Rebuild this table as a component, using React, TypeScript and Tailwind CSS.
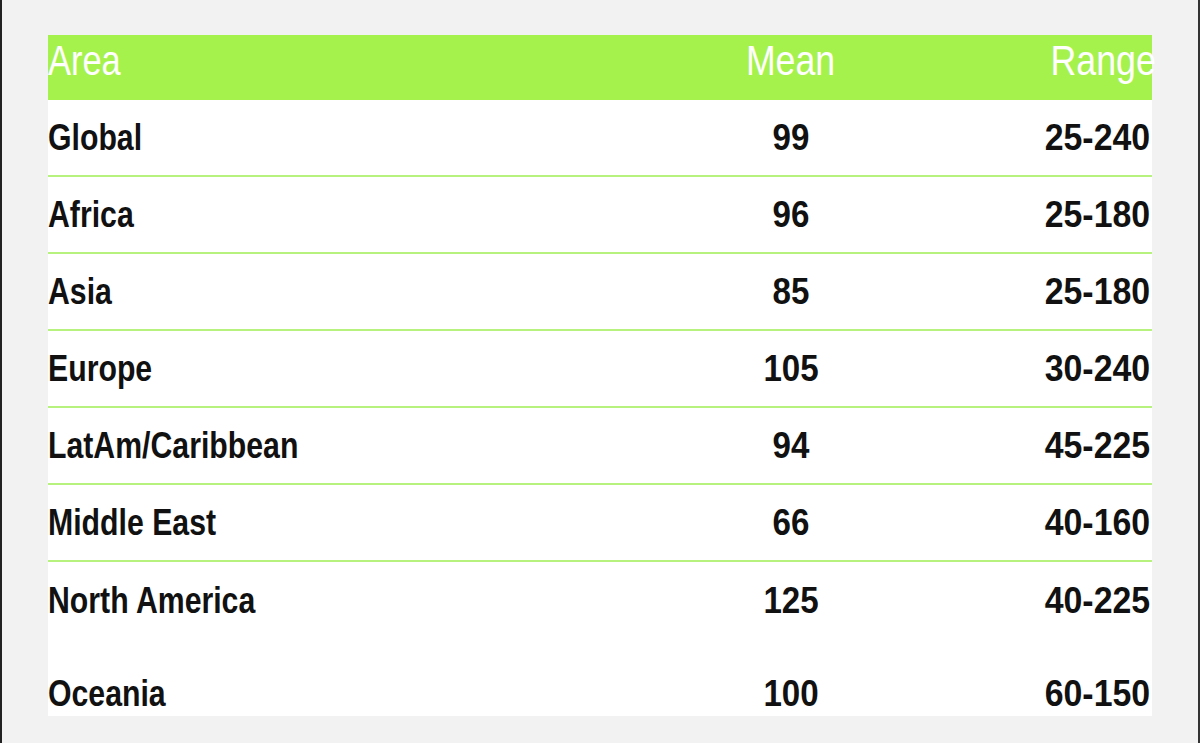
import React from "react";

const rows = [
  ["Global", "99", "25-240"],
  ["Africa", "96", "25-180"],
  ["Asia", "85", "25-180"],
  ["Europe", "105", "30-240"],
  ["LatAm/Caribbean", "94", "45-225"],
  ["Middle East", "66", "40-160"],
  ["North America", "125", "40-225"],
  ["Oceania", "100", "60-150"],
];

function Cells({ r }: { r: string[] }) {
  return (
    <>
      <div className="flex-1">
        <span className="inline-block origin-left scale-x-[0.84] whitespace-nowrap">{r[0]}</span>
      </div>
      <div className="w-[120px] text-center mr-[181px]">
        <span className="inline-block origin-center scale-x-[0.92] whitespace-nowrap">{r[1]}</span>
      </div>
      <div className="w-[120px] text-right pr-[2px]">
        <span className="inline-block origin-right scale-x-[0.94] whitespace-nowrap">{r[2]}</span>
      </div>
    </>
  );
}

export default function App() {
  return (
    <div
      className="w-[1200px] h-[743px] bg-[#f2f2f2] border-l-2 border-r-2 border-l-[#222] border-r-[#333] overflow-hidden"
      style={{ fontFamily: '"Liberation Sans", Arial, sans-serif' }}
    >
      <div className="ml-[46px] mt-[35px] w-[1104px] h-[681px] bg-white flex flex-col">
        <div className="h-[65px] bg-[#a6f24c] flex items-start pt-[2px] text-white text-[42px] leading-[48px]">
          <div className="flex-1">
            <span className="inline-block origin-left scale-x-[0.82]">Area</span>
          </div>
          <div className="w-[120px] text-center mr-[181px]">
            <span className="inline-block origin-center scale-x-[0.85]">Mean</span>
          </div>
          <div className="w-[120px] text-right pr-[2px]">
            <span className="inline-block origin-right scale-x-[0.85]">Range</span>
          </div>
        </div>
        {rows.slice(0, 7).map((r, i) => (
          <div
            key={r[0]}
            className={
              "h-[77px] flex items-center text-[#111] font-bold text-[36px] " +
              (i < 6 ? "border-b-2 border-[#b8f27e]" : "")
            }
          >
            <Cells r={r} />
          </div>
        ))}
        <div className="h-[77px] flex items-center pt-[33px] text-[#111] font-bold text-[36px]">
          <Cells r={rows[7]} />
        </div>
      </div>
    </div>
  );
}
